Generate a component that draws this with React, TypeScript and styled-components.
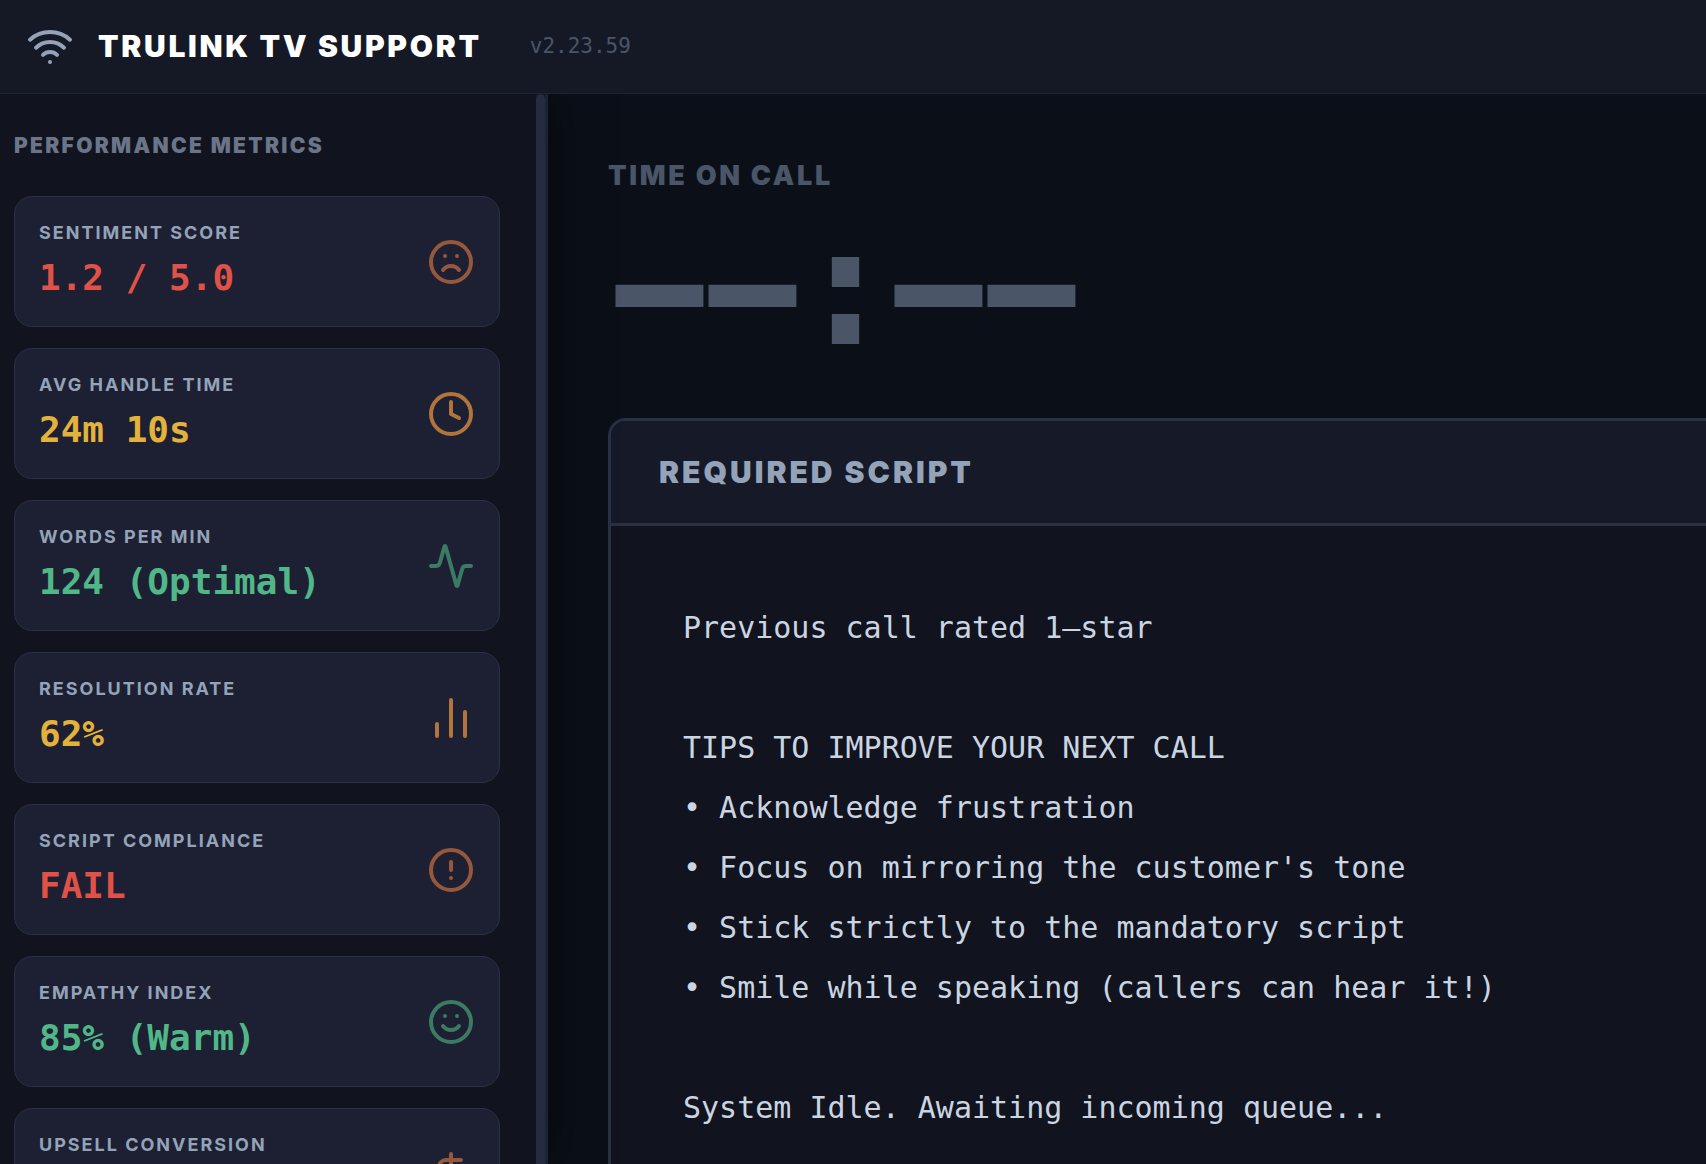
import React from "react";
import styled, { createGlobalStyle } from "styled-components";
import {
  Activity,
  ChartNoAxesColumn,
  CircleAlert,
  Clock,
  DollarSign,
  Frown,
  Smile,
  Wifi,
  type LucideIcon,
} from "lucide-react";

const sans = `Inter, "Liberation Sans", sans-serif`;
const mono = `Menlo, "DejaVu Sans Mono", "Liberation Mono", monospace`;

const GlobalStyle = createGlobalStyle`
  *, *::before, *::after { box-sizing: border-box; }
  body {
    margin: 0;
    background: #0b1018;
    font-family: ${sans};
    color: #cbd5e1;
  }
  h1, h2, h3, p, ul, dl, dt, dd { margin: 0; padding: 0; }
`;

const Page = styled.div`
  display: flex;
  flex-direction: column;
  height: 100vh;
  overflow: hidden;
`;

const Header = styled.header`
  position: relative;
  z-index: 2;
  display: flex;
  flex: none;
  align-items: center;
  height: 94px;
  padding: 0 26px 2px;
  background: #151926;
  border-bottom: 1px solid #1e2235;
`;

const Brand = styled.div`
  display: flex;
  align-items: center;
  gap: 24px;
  color: #94a3b8;
`;

const Title = styled.h1`
  font-size: 30px;
  line-height: 36px;
  font-weight: 900;
  letter-spacing: 0.09em;
  color: #ffffff;
`;

const Version = styled.span`
  margin-left: 48px;
  font-family: ${mono};
  font-size: 21px;
  line-height: 30px;
  color: #4a5568;
`;

const Columns = styled.div`
  display: flex;
  flex: 1;
  min-height: 0;
`;

const Sidebar = styled.aside`
  position: relative;
  z-index: 1;
  display: flex;
  flex: 0 0 548px;
  background: #11131e;
  border-right: 3px solid #1e2235;
  box-shadow: 6px 0 45px rgba(0, 0, 0, 0.5);
`;

const Metrics = styled.div`
  flex: 1;
  min-width: 0;
  padding: 36px 36px 0 14px;
  overflow: hidden;
`;

const ScrollThumb = styled.div`
  flex: none;
  width: 9px;
  border-radius: 5px 5px 0 0;
  background: #252c40;
`;

const MetricsHeading = styled.h2`
  margin-bottom: 34px;
  font-size: 21px;
  line-height: 32px;
  font-weight: 900;
  letter-spacing: 0.11em;
  color: #6b7589;
`;

const MetricList = styled.dl`
  display: flex;
  flex-direction: column;
  gap: 21px;
`;

type Tone = "bad" | "warn" | "good";

const valueColor: Record<Tone, string> = {
  bad: "#e05248",
  warn: "#e3b23c",
  good: "#52b788",
};

const iconColor: Record<Tone, string> = {
  bad: "#95583d",
  warn: "#b0743c",
  good: "#3b7a63",
};

const MetricCard = styled.div<{ $tone: Tone }>`
  display: flex;
  align-items: center;
  justify-content: space-between;
  padding: 24px;
  border: 1px solid #2a3145;
  border-radius: 18px;
  background: #1c2032;

  svg {
    flex: none;
    color: ${({ $tone }) => iconColor[$tone]};
  }
`;

const MetricLabel = styled.dt`
  font-size: 18px;
  line-height: 24px;
  font-weight: 700;
  letter-spacing: 2px;
  color: #94a3b8;
`;

const MetricValue = styled.dd<{ $tone: Tone }>`
  padding-top: 8px;
  min-height: 57px;
  font-family: ${mono};
  font-size: 36px;
  line-height: 49px;
  font-weight: 700;
  color: ${({ $tone }) => valueColor[$tone]};
`;

const Main = styled.main`
  display: flex;
  flex: 1;
  flex-direction: column;
  min-width: 0;
  padding: 60px 0 0 60px;
  background: #0b1018;
`;

const TimerLabel = styled.h2`
  font-size: 27px;
  line-height: 44px;
  font-weight: 900;
  letter-spacing: 0.1em;
  color: #4a5568;
`;

const Timer = styled.div`
  display: grid;
  grid-template-columns: repeat(5, 93px);
  margin: 16px 0 60px;
  padding-left: 5px;
  font-family: ${mono};
  line-height: 144px;
  font-weight: 700;
  color: #4a5568;
`;

const Digit = styled.span`
  display: flex;
  justify-content: center;
  height: 144px;
  font-size: 136px;
  -webkit-text-stroke: 6px #4a5568;
`;

const Colon = styled.span`
  display: flex;
  justify-content: center;
  height: 144px;
  font-size: 168px;
`;

const ScriptPanel = styled.section`
  display: flex;
  flex: 1;
  flex-direction: column;
  min-height: 0;
  border: 3px solid #2a3145;
  border-width: 3px 0 0 3px;
  border-radius: 18px 0 0 0;
  background: #11131e;
  overflow: hidden;
`;

const ScriptHeading = styled.h2`
  padding: 33px 48px;
  border-bottom: 3px solid #2a3145;
  background: #161a28;
  font-size: 30px;
  line-height: 36px;
  font-weight: 900;
  letter-spacing: 0.1em;
  color: #94a3b8;
`;

const ScriptBody = styled.div`
  padding: 72px;
  font-family: ${mono};
  font-size: 30px;
  line-height: 60px;
  color: #cbd5e1;
  white-space: pre-wrap;
`;

type Metric = { label: string; value?: string; tone: Tone; icon: LucideIcon };

const metrics: Metric[] = [
  { label: "SENTIMENT SCORE", value: "1.2 / 5.0", tone: "bad", icon: Frown },
  { label: "AVG HANDLE TIME", value: "24m 10s", tone: "warn", icon: Clock },
  { label: "WORDS PER MIN", value: "124 (Optimal)", tone: "good", icon: Activity },
  { label: "RESOLUTION RATE", value: "62%", tone: "warn", icon: ChartNoAxesColumn },
  { label: "SCRIPT COMPLIANCE", value: "FAIL", tone: "bad", icon: CircleAlert },
  { label: "EMPATHY INDEX", value: "85% (Warm)", tone: "good", icon: Smile },
  { label: "UPSELL CONVERSION", tone: "bad", icon: DollarSign },
];

const script = [
  "Previous call rated 1–star",
  "",
  "TIPS TO IMPROVE YOUR NEXT CALL",
  "• Acknowledge frustration",
  "• Focus on mirroring the customer's tone",
  "• Stick strictly to the mandatory script",
  "• Smile while speaking (callers can hear it!)",
  "",
  "System Idle. Awaiting incoming queue...",
].join("\n");

export default function App() {
  return (
    <>
      <GlobalStyle />
      <Page>
        <Header>
          <Brand>
            <Wifi size={48} aria-hidden />
            <Title>TRULINK TV SUPPORT</Title>
          </Brand>
          <Version>v2.23.59</Version>
        </Header>
        <Columns>
          <Sidebar>
            <Metrics>
              <MetricsHeading>PERFORMANCE METRICS</MetricsHeading>
              <MetricList>
                {metrics.map(({ label, value, tone, icon: Icon }) => (
                  <MetricCard key={label} $tone={tone}>
                    <div>
                      <MetricLabel>{label}</MetricLabel>
                      <MetricValue $tone={tone}>{value}</MetricValue>
                    </div>
                    <Icon size={48} aria-hidden />
                  </MetricCard>
                ))}
              </MetricList>
            </Metrics>
            <ScrollThumb />
          </Sidebar>
          <Main>
            <TimerLabel>TIME ON CALL</TimerLabel>
            <Timer role="timer">
              <Digit>–</Digit>
              <Digit>–</Digit>
              <Colon>:</Colon>
              <Digit>–</Digit>
              <Digit>–</Digit>
            </Timer>
            <ScriptPanel>
              <ScriptHeading>REQUIRED SCRIPT</ScriptHeading>
              <ScriptBody>{script}</ScriptBody>
            </ScriptPanel>
          </Main>
        </Columns>
      </Page>
    </>
  );
}
